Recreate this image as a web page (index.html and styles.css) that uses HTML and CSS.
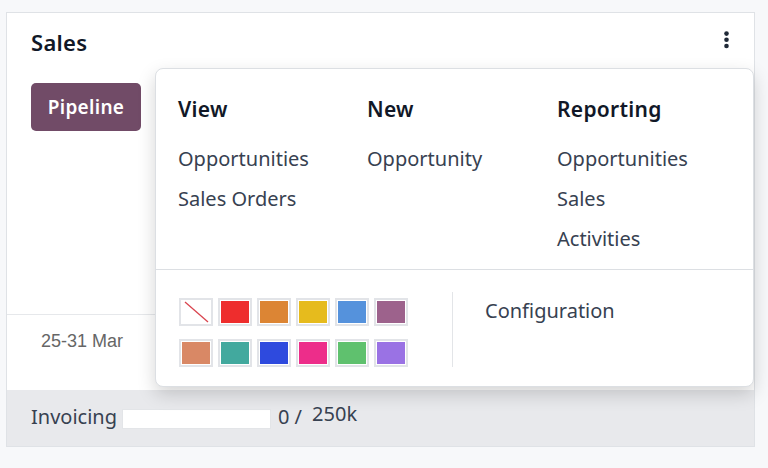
FILE: index.html
```html
<!DOCTYPE html>
<html lang="en">
<head>
<meta charset="utf-8">
<title>Sales</title>
<link rel="stylesheet" href="styles.css">
</head>
<body>
<div class="page">
  <div class="card">
    <div class="card-header">
      <div class="card-title">Sales</div>
      <svg class="kebab" width="5" height="18" viewBox="0 0 5 18">
        <circle cx="2.5" cy="2.6" r="2.3"/>
        <circle cx="2.5" cy="8.8" r="2.3"/>
        <circle cx="2.5" cy="15" r="2.3"/>
      </svg>
    </div>
    <div class="plot">
      <button class="btn-primary">Pipeline</button>
    </div>
    <div class="xlabels"><span class="xlabel">25-31 Mar</span></div>
    <div class="card-footer">
      <span class="footer-label">Invoicing</span>
      <span class="progress"></span>
      <span class="progress-value">0 /</span>
      <span class="progress-max">250k</span>
    </div>

    <div class="dropdown">
      <div class="menu-cols">
        <div class="menu-col">
          <div class="menu-head">View</div>
          <div class="menu-item">Opportunities</div>
          <div class="menu-item">Sales Orders</div>
        </div>
        <div class="menu-col">
          <div class="menu-head">New</div>
          <div class="menu-item">Opportunity</div>
        </div>
        <div class="menu-col">
          <div class="menu-head">Reporting</div>
          <div class="menu-item">Opportunities</div>
          <div class="menu-item">Sales</div>
          <div class="menu-item">Activities</div>
        </div>
      </div>
      <div class="menu-bottom">
        <div class="swatches">
          <span class="swatch none"><svg width="28" height="22" viewBox="0 0 28 22"><line x1="3" y1="1" x2="26" y2="21" stroke="#d9454f" stroke-width="1.3"/></svg></span>
          <span class="swatch c1"></span>
          <span class="swatch c2"></span>
          <span class="swatch c3"></span>
          <span class="swatch c4"></span>
          <span class="swatch c5"></span>
          <span class="swatch c6"></span>
          <span class="swatch c7"></span>
          <span class="swatch c8"></span>
          <span class="swatch c9"></span>
          <span class="swatch c10"></span>
          <span class="swatch c11"></span>
        </div>
        <div class="vsep"></div>
        <div class="menu-item config">Configuration</div>
      </div>
    </div>
  </div>
</div>
</body>
</html>
```

FILE: styles.css
```css
* { box-sizing: border-box; }

html, body {
  margin: 0;
  background: #f7f8fa;
  font-family: "Noto Sans", "Open Sans", sans-serif;
}

.page {
  padding: 12px 13px 0 6px;
}

.card {
  position: relative;
  width: 749px;
  height: 435px;
  background: #fff;
  border: 1px solid #dfe2e6;
  display: flex;
  flex-direction: column;
}

.card-header {
  display: flex;
  justify-content: space-between;
  align-items: flex-start;
  padding: 15px 25px 0 24px;
  height: 43px;
}

.card-title {
  font-size: 22px;
  font-weight: 600;
  letter-spacing: 0.3px;
  line-height: 28px;
  color: #111827;
}

.kebab {
  margin-top: 3px;
  fill: #1f2937;
}

.plot {
  height: 259px;
  padding: 27px 0 0 24px;
  border-bottom: 1px solid #e6e8eb;
}

.btn-primary {
  width: 110px;
  height: 48px;
  border: none;
  border-radius: 5px;
  background: #714b67;
  color: #fff;
  font-family: "Noto Sans", "Open Sans", sans-serif;
  font-size: 19px;
  font-weight: 600;
  letter-spacing: 0.3px;
  padding: 0;
  line-height: 44px;
  vertical-align: top;
}

.xlabels {
  height: 75px;
  padding: 14px 0 0 34px;
}

.xlabel {
  font-family: "Liberation Sans", Arial, sans-serif;
  font-size: 18px;
  line-height: 24px;
  color: #666;
}

.card-footer {
  flex: 1;
  background: #e8e9ec;
  display: flex;
  align-items: flex-start;
  padding: 13px 0 0 24px;
  font-size: 20px;
  line-height: 28px;
  color: #374151;
}

.footer-label {
  margin-right: 5px;
}

.progress {
  width: 149px;
  height: 20px;
  margin-top: 6px;
  background: #fff;
  border: 1px solid #e3e5e8;
}

.progress-value {
  margin-left: 7px;
}

.progress-max {
  margin-left: 10px;
  margin-top: -3px;
}

.dropdown {
  position: absolute;
  left: 148px;
  top: 55px;
  width: 599px;
  height: 319px;
  background: #fff;
  border: 1px solid #dcdfe3;
  border-radius: 8px;
  box-shadow: 0 7px 18px rgba(0, 0, 0, 0.17);
  display: flex;
  flex-direction: column;
}

.menu-cols {
  display: grid;
  grid-template-columns: 189px 190px 1fr;
  padding: 26px 22px 10px;
  border-bottom: 1px solid #dcdfe3;
}

.menu-head {
  font-size: 21px;
  font-weight: 600;
  letter-spacing: 0.3px;
  line-height: 28px;
  color: #111827;
  margin-bottom: 16px;
}

.menu-item {
  font-size: 20px;
  line-height: 40px;
  color: #374151;
}

.menu-bottom {
  display: flex;
  padding: 22px 0 19px 23px;
}

.swatches {
  display: grid;
  grid-template-columns: repeat(6, 34px);
  column-gap: 5px;
  row-gap: 13px;
  padding-top: 6px;
}

.swatch {
  display: block;
  width: 34px;
  height: 28px;
  border: 2px solid #e2e4e8;
  padding: 1px;
  background-clip: content-box;
  background-color: #fff;
}

.swatch svg { display: block; }

.c1 { background-color: #ee2d2d; }
.c2 { background-color: #dc8534; }
.c3 { background-color: #e6bb1d; }
.c4 { background-color: #5592dc; }
.c5 { background-color: #9d628c; }
.c6 { background-color: #d98865; }
.c7 { background-color: #42a99e; }
.c8 { background-color: #2e4ade; }
.c9 { background-color: #ed2d8a; }
.c10 { background-color: #5fc16e; }
.c11 { background-color: #9a72e4; }

.vsep {
  width: 1px;
  background: #e3e5e8;
  margin: 0 32px 0 44px;
}

.config {
  margin-top: -1px;
}
```
